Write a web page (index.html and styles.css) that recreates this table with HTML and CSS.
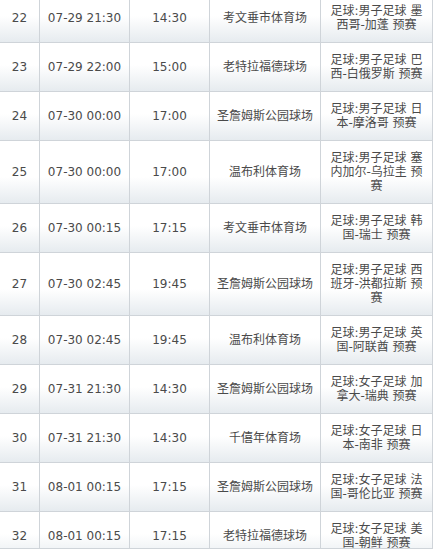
FILE: index.html
```html
<!DOCTYPE html>
<html lang="zh-CN">
<head>
<meta charset="utf-8">
<title>赛程</title>
<link rel="stylesheet" href="styles.css">
</head>
<body>
<div class="frame">
<table class="schedule">
<colgroup>
<col class="c-no"><col class="c-bj"><col class="c-local"><col class="c-venue"><col class="c-event">
</colgroup>
<tbody>
<tr><td>22</td><td>07-29 21:30</td><td>14:30</td><td>考文垂市体育场</td><td class="event">足球:男子足球 墨西哥-加蓬 预赛</td></tr>
<tr><td>23</td><td>07-29 22:00</td><td>15:00</td><td>老特拉福德球场</td><td class="event">足球:男子足球 巴西-白俄罗斯 预赛</td></tr>
<tr><td>24</td><td>07-30 00:00</td><td>17:00</td><td>圣詹姆斯公园球场</td><td class="event">足球:男子足球 日本-摩洛哥 预赛</td></tr>
<tr><td>25</td><td>07-30 00:00</td><td>17:00</td><td>温布利体育场</td><td class="event">足球:男子足球 塞内加尔-乌拉圭 预赛</td></tr>
<tr><td>26</td><td>07-30 00:15</td><td>17:15</td><td>考文垂市体育场</td><td class="event">足球:男子足球 韩国-瑞士 预赛</td></tr>
<tr><td>27</td><td>07-30 02:45</td><td>19:45</td><td>圣詹姆斯公园球场</td><td class="event">足球:男子足球 西班牙-洪都拉斯 预赛</td></tr>
<tr><td>28</td><td>07-30 02:45</td><td>19:45</td><td>温布利体育场</td><td class="event">足球:男子足球 英国-阿联酋 预赛</td></tr>
<tr><td>29</td><td>07-31 21:30</td><td>14:30</td><td>圣詹姆斯公园球场</td><td class="event">足球:女子足球 加拿大-瑞典 预赛</td></tr>
<tr><td>30</td><td>07-31 21:30</td><td>14:30</td><td>千僖年体育场</td><td class="event">足球:女子足球 日本-南非 预赛</td></tr>
<tr><td>31</td><td>08-01 00:15</td><td>17:15</td><td>圣詹姆斯公园球场</td><td class="event">足球:女子足球 法国-哥伦比亚 预赛</td></tr>
<tr><td>32</td><td>08-01 00:15</td><td>17:15</td><td>老特拉福德球场</td><td class="event">足球:女子足球 美国-朝鲜 预赛</td></tr>
</tbody>
</table>
</div>
</body>
</html>
```

FILE: styles.css
```css
html, body {
  margin: 0;
  padding: 0;
  background: #fff;
}

.frame {
  height: 548px;
  overflow: hidden;
  border-bottom: 1px solid #cfd4d9;
}

.schedule {
  margin-top: -6px;
  width: 433px;
  table-layout: fixed;
  border-collapse: separate;
  border-spacing: 0;
  font-family: "DejaVu Sans", "Noto Sans CJK SC", sans-serif;
  font-size: 12px;
  line-height: 14px;
  color: #4a4a4a;
}

.c-no { width: 40px; }
.c-bj { width: 90px; }
.c-local { width: 80px; }
.c-venue { width: 111px; }
.c-event { width: 112px; }

.schedule td {
  box-sizing: border-box;
  padding: 10px 4px;
  text-align: center;
  vertical-align: middle;
  border-right: 1px solid #cfd4d9;
  border-bottom: 1px solid #cfd4d9;
  background: linear-gradient(to bottom, #ffffff 0, #ffffff calc(100% - 26px), #e6ebef 100%);
  overflow: hidden;
}

.schedule td.event {
  padding-left: 8px;
  padding-right: 8px;
}
```
